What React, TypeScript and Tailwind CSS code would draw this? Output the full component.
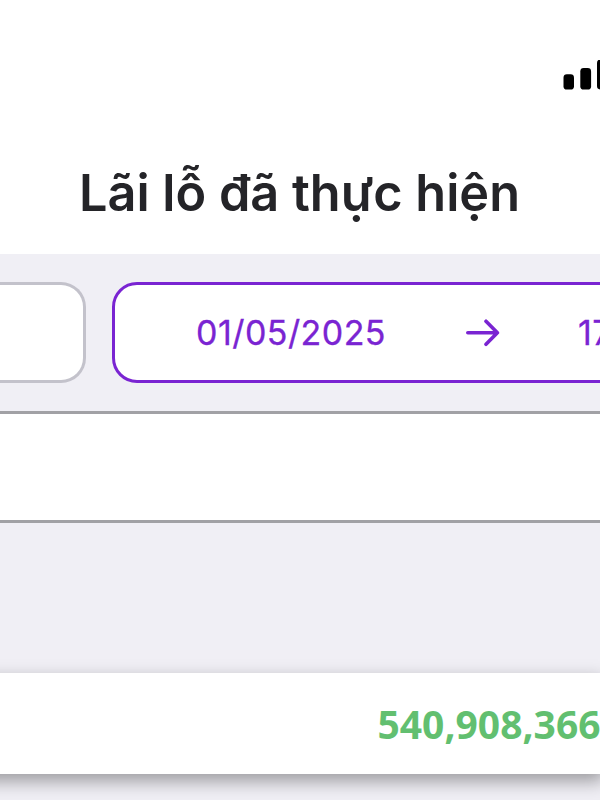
// Cellular strength, bars grow to the right and run off the screen edge
function SignalBars() {
  return (
    <svg width="37" height="30" viewBox="0 0 37 30" className="shrink-0" fill="#000">
      <rect x="0.5" y="14.3" width="10.5" height="15.3" rx="3.4" />
      <rect x="17.3" y="8" width="10.8" height="21.6" rx="3.4" />
      <rect x="34" y="-0.5" width="10.8" height="30" rx="3.4" />
    </svg>
  );
}

function ArrowRight() {
  return (
    <svg
      width="36"
      height="28"
      viewBox="0 0 36 28"
      className="shrink-0"
      fill="none"
      stroke="#7a24d2"
      strokeWidth="3.6"
      strokeLinecap="round"
      strokeLinejoin="round"
    >
      <path d="M2.8 13.8H32.4M21 2.2L32.4 13.8L21 25.3" />
    </svg>
  );
}

export default function App() {
  const dateCls =
    "whitespace-nowrap text-[34px] leading-[40px] font-normal tracking-[0.45px] text-[#7a24d2] [-webkit-text-stroke:0.3px_#7a24d2]";

  return (
    <div className="flex h-[800px] w-[600px] flex-col overflow-hidden bg-[#f0eff5] font-['Inter',sans-serif]">
      <header className="h-[254px] shrink-0 bg-white">
        <div className="flex h-[90px] items-end justify-end">
          <SignalBars />
        </div>
        <h1 className="mt-[73px] ml-[79px] text-[50.4px] leading-[60px] font-semibold whitespace-nowrap text-[#242428]">
          Lãi lỗ đã thực hiện
        </h1>
      </header>

      <div className="flex h-[157px] shrink-0 gap-[26px] pt-[28px]">
        <div className="h-[101px] w-[86px] shrink-0 rounded-r-[25px] border-[3px] border-l-0 border-[#c3c2cb] bg-white" />
        <div className="flex h-[101px] w-[700px] shrink-0 items-center rounded-[25px] border-[3px] border-[#7a24d2] bg-white pl-[81px]">
          <span className={`w-[269px] shrink-0 ${dateCls}`}>01/05/2025</span>
          <ArrowRight />
          <span className={`ml-[77px] ${dateCls}`}>17</span>
        </div>
      </div>

      <div className="h-[112px] shrink-0 border-y-[3px] border-[#a1a1a5] bg-white" />

      <div className="mt-[150px] -mr-[4px] -ml-[30px] flex h-[101px] shrink-0 items-center bg-white pl-[407.5px] shadow-[0_7px_17px_rgba(0,0,0,0.36)]">
        <span className="font-['Noto_Sans',sans-serif] text-[39px] leading-[48px] font-bold whitespace-nowrap text-[#62bf70]">
          540,908,366
        </span>
      </div>
    </div>
  );
}
